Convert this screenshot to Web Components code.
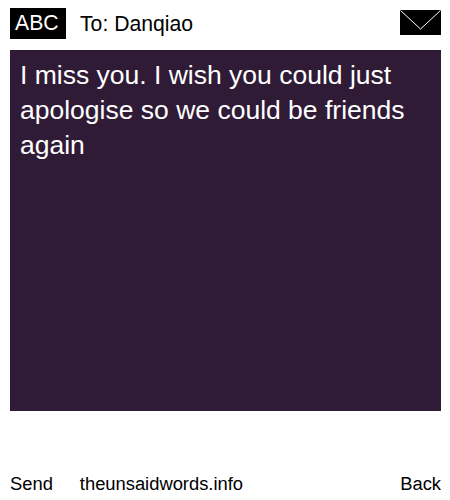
<!DOCTYPE html>
<html>
<head>
<meta charset="utf-8">
<style>
  html, body { margin: 0; padding: 0; background: #fff; }
  body { font-family: "Liberation Sans", Arial, sans-serif; }
</style>
</head>
<body>
<message-screen>
  <message-header slot="header" to="Danqiao"></message-header>
  <message-body>I miss you. I wish you could just apologise so we could be friends again</message-body>
  <message-footer slot="footer"></message-footer>
</message-screen>
<script>
class MessageScreen extends HTMLElement {
  constructor() {
    super();
    this.attachShadow({ mode: 'open' });
  }
  connectedCallback() {
    this.shadowRoot.innerHTML = `
      <style>
        :host { display: flex; flex-direction: column; width: 450px; height: 500px; box-sizing: border-box; padding: 8px 9px 0 10px; }
      </style>
      <slot name="header"></slot>
      <slot></slot>
      <slot name="footer"></slot>
    `;
  }
}

class MessageHeader extends HTMLElement {
  constructor() {
    super();
    this.attachShadow({ mode: 'open' });
  }
  connectedCallback() {
    this.shadowRoot.innerHTML = `
      <style>
        :host { display: flex; align-items: center; height: 31px; margin-bottom: 11px; font-size: 21.2px; color: #000; }
        .abc { background: #000; color: #fff; width: 56px; height: 31px; box-sizing: border-box; padding-left: 5px; line-height: 30px; }
        .to { margin-left: 14px; flex: 1; }
        svg { display: block; width: 41px; height: 25px; margin-top: -2px; }
      </style>
      <div class="abc">ABC</div>
      <div class="to">To: ${this.getAttribute('to')}</div>
      <svg viewBox="0 0 41 25">
        <rect width="41" height="25" fill="#000"/>
        <path d="M0.5 0.5 L20.5 19 L40.5 0.5" fill="none" stroke="#fff" stroke-width="1"/>
      </svg>
    `;
  }
}

class MessageBody extends HTMLElement {
  constructor() {
    super();
    this.attachShadow({ mode: 'open' });
  }
  connectedCallback() {
    this.shadowRoot.innerHTML = `
      <style>
        :host { display: block; box-sizing: border-box; height: 361px; background: #301b36; color: #fff; padding: 8.4px 10px 0; font-size: 26.5px; line-height: 34.6px; }
      </style>
      <slot></slot>
    `;
  }
}

class MessageFooter extends HTMLElement {
  constructor() {
    super();
    this.attachShadow({ mode: 'open' });
  }
  connectedCallback() {
    this.shadowRoot.innerHTML = `
      <style>
        :host { display: flex; margin-top: 62px; font-size: 18.35px; line-height: 22px; color: #000; }
        .site { margin-left: 27px; flex: 1; }
      </style>
      <div>Send</div>
      <div class="site">theunsaidwords.info</div>
      <div>Back</div>
    `;
  }
}

customElements.define('message-screen', MessageScreen);
customElements.define('message-header', MessageHeader);
customElements.define('message-body', MessageBody);
customElements.define('message-footer', MessageFooter);
</script>
</body>
</html>
